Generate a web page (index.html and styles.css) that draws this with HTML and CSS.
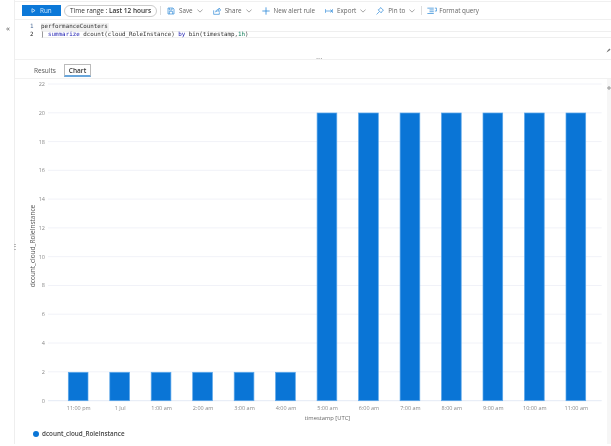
FILE: index.html
```html
<!DOCTYPE html>
<html lang="en">
<head>
<meta charset="utf-8">
<title>Logs chart</title>
<link rel="stylesheet" href="styles.css">
</head>
<body>
<div class="app">
  <aside class="rail">
    <span class="rail-chevrons">«</span>
    <span class="rail-grip">⋮</span>
  </aside>
  <main class="main">
    <div class="toolbar">
      <button class="run"><svg class="run-icon" viewBox="0 0 8 8"><path d="M1.5 1v6l5-3z" fill="none" stroke="#fff"/></svg>Run</button>
      <div class="range">Time range :&nbsp;<b>Last 12 hours</b></div>
      <i class="sep"></i>
      <span class="tool"><svg viewBox="0 0 12 12"><path d="M1.5 1.500h7.500l1.500 1.500v7.500h-9zM3.500 1.500v3h4v-3M3.500 10.500v-4h5v4" fill="none" stroke="#2b88d8"/></svg>Save<svg class="chev" viewBox="0 0 8 5"><path d="M.5.500 4 4 7.500.5" fill="none" stroke="#888"/></svg></span>
      <span class="tool"><svg viewBox="0 0 12 12"><path d="M1 5v6h8.500V8M4 7.500c.5-3 2.500-4 5-4V1.500l2.500 3-2.500 2.500V5.500c-2 0-3.500.5-5 2z" fill="none" stroke="#2b88d8"/></svg>Share<svg class="chev" viewBox="0 0 8 5"><path d="M.5.500 4 4 7.500.5" fill="none" stroke="#888"/></svg></span>
      <span class="tool"><svg viewBox="0 0 12 12"><path d="M6 .5v11M.5 6h11" fill="none" stroke="#2b88d8" stroke-width="1.200"/></svg>New alert rule</span>
      <span class="tool"><svg viewBox="0 0 12 8"><path d="M.5 1v6M.5 4h10M8 2l2.500 2L8 6M11.500 1v6" fill="none" stroke="#2b88d8"/></svg>Export<svg class="chev" viewBox="0 0 8 5"><path d="M.5.500 4 4 7.500.5" fill="none" stroke="#888"/></svg></span>
      <span class="tool"><svg viewBox="0 0 12 12"><path d="M7 .8 11.200 5 9.800 5.600 7.700 8.800 3.200 4.300 6.400 2.200zM5.200 6.800.8 11.200" fill="none" stroke="#2b88d8"/></svg>Pin to<svg class="chev" viewBox="0 0 8 5"><path d="M.5.500 4 4 7.500.5" fill="none" stroke="#888"/></svg></span>
      <i class="sep sep-end"></i>
      <span class="tool tool-format"><svg viewBox="0 0 14 10"><path d="M.5 1h9M3.500 3.500h6M3.500 6h6M.5 8.500h9M11 1h2.500v4H11" fill="none" stroke="#2b88d8"/></svg>Format query</span>
    </div>
    <section class="editor">
      <div class="code-line"><span class="ln">1</span><code class="hl">performanceCounters</code></div>
      <div class="code-line code-current"><span class="ln ln-active">2</span><code>| <span class="kw">summarize</span> dcount(cloud_RoleInstance) <span class="kw">by</span> bin(timestamp,<span class="num">1h</span>)</code></div>
      <svg class="editor-pin" viewBox="0 0 6 6"><path d="M.5 5.500 2 3l2-2.500L5.500 2 3 4z" fill="#777"/></svg>
    </section>
    <div class="splitter"><span>...</span></div>
    <nav class="tabs">
      <span class="tab">Results</span>
      <span class="tab tab-active">Chart</span>
    </nav>
    <section class="chart">
      <svg class="plot" viewBox="0 1 597 354" aria-label="dcount by timestamp">
        <g class="grid">
          <path d="M33 6H586.700M33 34.800H586.700M33 63.600H586.700M33 92.300H586.700M33 121.100H586.700M33 149.900H586.700M33 178.700H586.700M33 207.500H586.700M33 236.200H586.700M33 265H586.700M33 293.800H586.700"/>
          <path class="axis" d="M33 322.700H586.700"/>
        </g>
        <g class="ticks">
          <text x="30" y="8">22</text><text x="30" y="37">20</text><text x="30" y="66">18</text><text x="30" y="94">16</text><text x="30" y="123">14</text><text x="30" y="152">12</text><text x="30" y="181">10</text><text x="30" y="209">8</text><text x="30" y="238">6</text><text x="30" y="267">4</text><text x="30" y="296">2</text><text x="30" y="325">0</text>
        </g>
        <g class="bars">
          <rect x="53.300" y="294.300" width="19.700" height="28.400"/>
          <rect x="94.800" y="294.300" width="19.700" height="28.400"/>
          <rect x="136.200" y="294.300" width="19.700" height="28.400"/>
          <rect x="177.700" y="294.300" width="19.700" height="28.400"/>
          <rect x="219.200" y="294.300" width="19.700" height="28.400"/>
          <rect x="260.600" y="294.300" width="19.700" height="28.400"/>
          <rect x="302.100" y="35" width="19.700" height="287.700"/>
          <rect x="343.600" y="35" width="19.700" height="287.700"/>
          <rect x="385.100" y="35" width="19.700" height="287.700"/>
          <rect x="426.500" y="35" width="19.700" height="287.700"/>
          <rect x="468" y="35" width="19.700" height="287.700"/>
          <rect x="509.500" y="35" width="19.700" height="287.700"/>
          <rect x="551" y="35" width="19.700" height="287.700"/>
        </g>
        <g class="xlabels">
          <text x="63.700" y="332">11:00 pm</text><text x="105.200" y="332">1 Jul</text><text x="146.600" y="332">1:00 am</text><text x="188.100" y="332">2:00 am</text><text x="229.500" y="332">3:00 am</text><text x="271" y="332">4:00 am</text><text x="312.500" y="332">5:00 am</text><text x="353.900" y="332">6:00 am</text><text x="395.400" y="332">7:00 am</text><text x="436.800" y="332">8:00 am</text><text x="478.300" y="332">9:00 am</text><text x="519.800" y="332">10:00 am</text><text x="561.300" y="332">11:00 am</text>
        </g>
        <text class="xtitle" x="312.500" y="342">timestamp [UTC]</text>
        <text class="ytitle" transform="translate(20 168) rotate(-90)">dcount_cloud_RoleInstance</text>
      </svg>
      <div class="legend"><i class="dot"></i>dcount_cloud_RoleInstance</div>
      <div class="side-strip"><svg class="gear" viewBox="0 0 6 6"><circle cx="3" cy="3" r="1.800" fill="none" stroke="#777" stroke-width="1.200"/></svg></div>
    </section>
  </main>
</div>
</body>
</html>
```
FILE: styles.css
```css
* { box-sizing: border-box; }
html, body { margin: 0; height: 100%; overflow: hidden; background: #fff; }
body { font-family: "Open Sans", "Liberation Sans", sans-serif; color: #444; filter: blur(.35px); }
.app { display: flex; width: 611px; height: 444px; }
.rail { width: 15px; flex: none; border-right: 1px solid #eee; position: relative; }
.rail-chevrons { position: absolute; left: 6px; top: 23px; font-size: 8px; line-height: 10px; color: #555; }
.rail-grip { position: absolute; left: 11px; top: 240px; font-size: 8px; line-height: 12px; color: #666; }
.main { flex: 1; display: flex; flex-direction: column; min-width: 0; }
.toolbar { height: 19px; margin-top: 1px; display: flex; align-items: center; border-top: 1px solid #f0f0f0; border-bottom: 1px solid #f0f0f0; font-size: 6.300px; color: #666; white-space: nowrap; }
.run { width: 39px; height: 11px; margin-left: 7px; background: #0b78d8; color: #cfe6fa; border: 0; padding: 0 0 0 9px; font: 6.300px "Open Sans", sans-serif; display: flex; align-items: center; gap: 4px; }
.run-icon { width: 5px; height: 5px; }
.range { width: 93px; height: 12px; margin-left: 3px; border: 1px solid #ccc; border-radius: 7px; display: flex; align-items: center; justify-content: center; font-size: 6.500px; color: #333; }
.range b { font-weight: 600; }
.sep { width: 1px; height: 9px; background: #ddd; margin-left: 3px; }
.sep-end { margin-left: 6px; }
.tool { display: flex; align-items: center; margin-left: 10px; }
.sep + .tool { margin-left: 6px; }
.tool svg:first-child { width: 8px; height: 8px; margin-right: 4px; flex: none; }
.chev { width: 6px; height: 4px; margin-left: 4px; flex: none; }
.sep-end + .tool { margin-left: 5px; }
.tool-format svg:first-child { width: 10px; margin-right: 2px; }
.editor { height: 39px; padding-top: 3px; position: relative; font-family: "DejaVu Sans Mono", "Liberation Mono", monospace; font-size: 5.850px; color: #333; }
.code-line { display: flex; height: 7.500px; line-height: 7.500px; white-space: nowrap; }
.code-current code { flex: 1; border-top: 1px solid #efefef; border-bottom: 1px solid #efefef; line-height: 5.500px; }
.ln { width: 15px; margin-left: 11px; padding-left: 4px; color: #4a6a96; flex: none; }
.ln-active { color: #222; }
code { font-family: inherit; }
.hl { background: #f2f2f2; padding-right: 1px; }
.kw { color: #1a1ab0; }
.num { color: #0a7a55; }
.editor-pin { position: absolute; right: 0; top: 28px; width: 5px; height: 5px; }
.splitter { height: 1px; background: #f1f1f1; position: relative; }
.splitter span { position: absolute; left: 301px; top: -7px; font-size: 8px; line-height: 8px; color: #888; }
.tabs { height: 19px; display: flex; align-items: center; padding: 3px 0 0 19px; border-bottom: 1px solid #f1f1f1; font-size: 6.500px; color: #555; }
.tab { margin-right: 8px; }
.tab-active { height: 13px; line-height: 11px; padding: 0 4px; border: 1px solid #bbb; border-bottom: 2px solid #6aa7dc; color: #333; font-weight: 600; }
.chart { flex: 1; position: relative; min-height: 0; }
.plot { position: absolute; left: 0; top: 0; width: 597px; height: 354px; display: block; font-family: "Open Sans", "Liberation Sans", sans-serif; }
.grid path { fill: none; stroke: #f1f2f8; stroke-width: 1; }
.grid .axis { stroke: #e4eaf5; }
.ticks text { font-size: 5.500px; fill: #888; text-anchor: end; }
.bars rect { fill: #0a75d6; stroke: #5aa6ea; stroke-width: .7; }
.xlabels text { font-size: 5.500px; fill: #888; text-anchor: middle; }
.xtitle { font-size: 5.800px; fill: #666; text-anchor: middle; }
.ytitle { font-size: 6.500px; fill: #555; text-anchor: middle; }
.legend { position: absolute; left: 18px; top: 350px; display: flex; align-items: center; gap: 3px; font-size: 6.300px; font-weight: 600; color: #444; }
.dot { width: 6px; height: 6px; border-radius: 50%; background: #0a75d6; }
.side-strip { position: absolute; right: 0; top: 0; width: 4px; height: 100%; background: #f6f6f6; }
.gear { position: absolute; right: 0; top: 6px; width: 4px; height: 6px; display: block; }
```
